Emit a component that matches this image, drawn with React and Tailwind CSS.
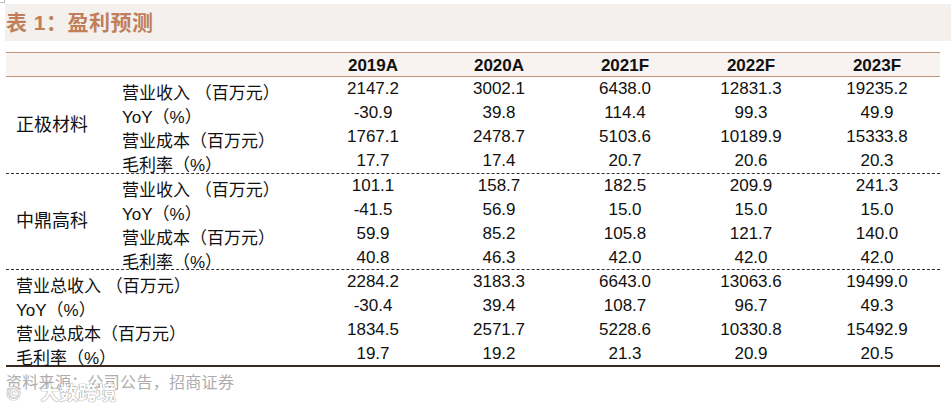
import React from "react";

const font = { fontFamily: '"Liberation Sans", Arial, "Noto Sans CJK SC", sans-serif' };

const years = ["2019A", "2020A", "2021F", "2022F", "2023F"];

const groups = [
  {
    name: "正极材料",
    rows: [
      ["营业收入 （百万元）", ["2147.2", "3002.1", "6438.0", "12831.3", "19235.2"]],
      ["YoY（%）", ["-30.9", "39.8", "114.4", "99.3", "49.9"]],
      ["营业成本（百万元）", ["1767.1", "2478.7", "5103.6", "10189.9", "15333.8"]],
      ["毛利率（%）", ["17.7", "17.4", "20.7", "20.6", "20.3"]],
    ],
  },
  {
    name: "中鼎高科",
    rows: [
      ["营业收入 （百万元）", ["101.1", "158.7", "182.5", "209.9", "241.3"]],
      ["YoY（%）", ["-41.5", "56.9", "15.0", "15.0", "15.0"]],
      ["营业成本（百万元）", ["59.9", "85.2", "105.8", "121.7", "140.0"]],
      ["毛利率（%）", ["40.8", "46.3", "42.0", "42.0", "42.0"]],
    ],
  },
];

const totals = [
  ["营业总收入 （百万元）", ["2284.2", "3183.3", "6643.0", "13063.6", "19499.0"]],
  ["YoY（%）", ["-30.4", "39.4", "108.7", "96.7", "49.3"]],
  ["营业总成本（百万元）", ["1834.5", "2571.7", "5228.6", "10330.8", "15492.9"]],
  ["毛利率（%）", ["19.7", "19.2", "21.3", "20.9", "20.5"]],
];

function Nums({ vals, last }) {
  return vals.map((v, i) => (
    <div
      key={i}
      className={
        "flex items-center justify-center text-[17px] text-[#111] " + (last ? "h-[23px]" : "h-[24px]")
      }
    >
      {v}
    </div>
  ));
}

function Label({ children, span, last }) {
  return (
    <div
      className={
        "flex items-center pt-[9px] text-[17px] text-[#111] whitespace-nowrap leading-none " +
        (span ? "col-span-2 pl-[10px] " : "pl-[6px] ") +
        (last ? "h-[23px]" : "h-[24px]")
      }
    >
      {children}
    </div>
  );
}

export default function App() {
  return (
    <div className="relative w-[952px] h-[406px] bg-white overflow-hidden" style={font}>
      <div className="absolute left-0 top-0 w-[5px] h-[3px] border-r border-b border-[#bbb]" />
      <div className="ml-[5px] mt-[4px] w-[946px] h-[37px] bg-[#f3f0ee] flex items-center pl-[1px]">
        <span className="text-[21px] font-bold text-[#c07f5a] tracking-[0.5px]">表 1：盈利预测</span>
      </div>

      <div className="ml-[6px] mt-[11px] w-[934px]">
        <div className="grid grid-cols-[110px_194px_repeat(5,126px)] h-[25px] border-y border-[#c09478] bg-[#f8f3f0]">
          <div />
          <div />
          {years.map((y) => (
            <div key={y} className="flex items-center justify-center text-[17px] font-bold text-[#111]">
              {y}
            </div>
          ))}
        </div>

        {groups.map((g, gi) => (
          <div
            key={g.name}
            className="grid grid-cols-[110px_194px_repeat(5,126px)] border-b border-dashed border-[#333]"
          >
            <div className="row-span-4 flex items-center pl-[10px] text-[18px] text-[#111]">{g.name}</div>
            {g.rows.map(([label, vals], ri) => (
              <React.Fragment key={label}>
                <Label last={gi === 1 && ri === 3}>{label}</Label>
                <Nums vals={vals} last={gi === 1 && ri === 3} />
              </React.Fragment>
            ))}
          </div>
        ))}

        <div className="grid grid-cols-[110px_194px_repeat(5,126px)] border-b-2 border-[#3a2a22]">
          {totals.map(([label, vals], ri) => (
            <React.Fragment key={label}>
              <Label span last={ri === 3}>{label}</Label>
              <Nums vals={vals} last={ri === 3} />
            </React.Fragment>
          ))}
        </div>
      </div>

      <div className="ml-[6px] mt-[6px] text-[16px] text-[#adadad] leading-[20px] tracking-[0.3px]">
        资料来源：公司公告，招商证券
      </div>

      <div className="absolute left-[7px] top-[380px] flex items-center gap-[20px] text-white font-bold [text-shadow:0_0_1px_#888,0_0_1px_#888]">
        <span className="text-[18px]">©</span>
        <span className="text-[19px]">大数跨境</span>
      </div>
    </div>
  );
}
